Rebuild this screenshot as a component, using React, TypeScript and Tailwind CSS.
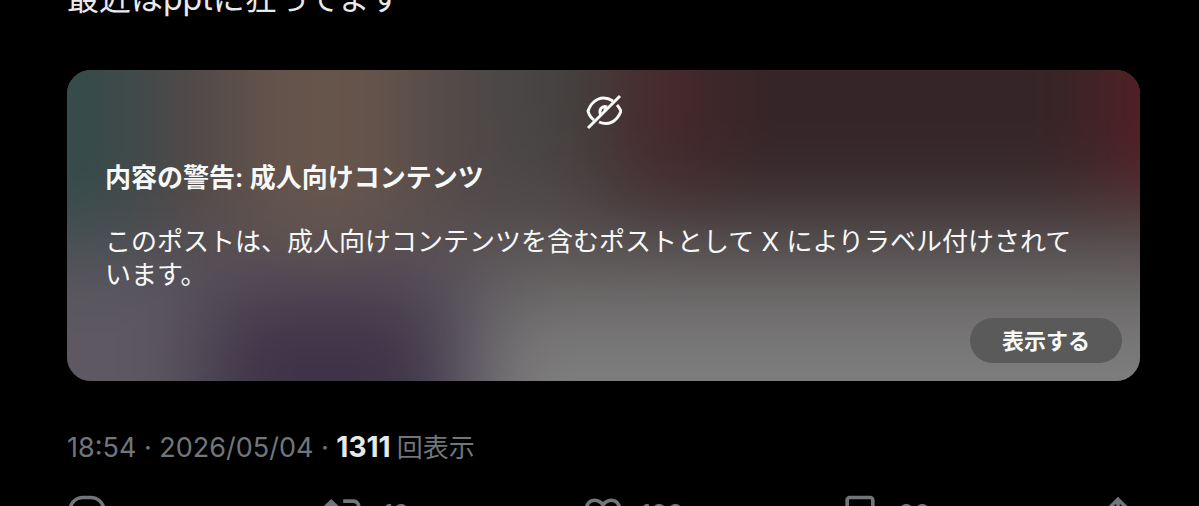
import { useState } from 'react';

interface Action {
  label: string;
  count?: string;
  path: string;
}

const actions: Action[] = [
  {
    label: '返信',
    path: 'M1.751 10c0-4.42 3.584-8 8.005-8h4.366c4.49 0 8.129 3.64 8.129 8.13 0 2.96-1.607 5.68-4.196 7.11l-8.054 4.46v-3.69h-.067c-4.49.1-8.183-3.51-8.183-8.01zm8.005-6c-3.317 0-6.005 2.69-6.005 6 0 3.37 2.77 6.08 6.138 6.01l.351-.01h1.761v2.3l5.087-2.81c1.951-1.08 3.163-3.13 3.163-5.36 0-3.39-2.744-6.13-6.129-6.13H9.756z',
  },
  {
    label: 'リポスト',
    count: '19',
    path: 'M4.5 3.88l4.432 4.14-1.364 1.46L5.5 7.55V16c0 1.1.896 2 2 2H13v2H7.5c-2.209 0-4-1.79-4-4V7.55L1.432 9.48.068 8.02 4.5 3.88zM16.5 6H11V4h5.5c2.209 0 4 1.79 4 4v8.45l2.068-1.93 1.364 1.46-4.432 4.14-4.432-4.14 1.364-1.46 2.068 1.93V8c0-1.1-.896-2-2-2z',
  },
  {
    label: 'いいね',
    count: '188',
    path: 'M16.697 5.5c-1.222-.06-2.679.51-3.89 2.16l-.805 1.09-.806-1.09C9.984 6.01 8.526 5.44 7.304 5.5c-1.243.07-2.349.78-2.91 1.91-.552 1.12-.633 2.78.479 4.82 1.074 1.97 3.257 4.27 7.129 6.61 3.87-2.34 6.052-4.64 7.126-6.61 1.111-2.04 1.03-3.7.477-4.82-.561-1.13-1.666-1.84-2.908-1.91zm4.187 7.69c-1.351 2.48-4.001 5.12-8.379 7.67l-.503.3-.504-.3c-4.379-2.55-7.029-5.19-8.382-7.67-1.36-2.5-1.41-4.86-.514-6.67.887-1.79 2.647-2.91 4.601-3.01 1.651-.09 3.368.56 4.798 2.01 1.429-1.45 3.146-2.1 4.796-2.01 1.954.1 3.714 1.22 4.601 3.01.896 1.81.846 4.17-.514 6.67z',
  },
  {
    label: 'ブックマーク',
    count: '88',
    path: 'M4 4.5C4 3.12 5.119 2 6.5 2h11C18.881 2 20 3.12 20 4.5v18.44l-8-5.71-8 5.71V4.5zM6.5 4c-.276 0-.5.22-.5.5v14.56l6-4.29 6 4.29V4.5c0-.28-.224-.5-.5-.5h-11z',
  },
  {
    label: '共有',
    path: 'M12 2.59l5.7 5.7-1.41 1.42L13 6.41V16h-2V6.41l-3.3 3.3-1.41-1.42L12 2.59zM21 15l-.02 3.51c0 1.38-1.12 2.49-2.5 2.49H5.5C4.11 21 3 19.88 3 18.5V15h2v3.5c0 .28.22.5.5.5h12.98c.28 0 .5-.22.5-.5L19 15h2z',
  },
];

function Haze() {
  return (
    <svg
      className="absolute inset-0 -z-10 h-full w-full"
      viewBox="0 0 1074 312"
      preserveAspectRatio="none"
      aria-hidden="true"
    >
      <defs>
        <filter id="haze" x="-10%" y="-10%" width="120%" height="120%" colorInterpolationFilters="sRGB">
          <feGaussianBlur stdDeviation="44" />
        </filter>
      </defs>
      <g filter="url(#haze)">
        <rect x="-200" y="-200" width="1500" height="400" fill="#504849" />
        <rect x="-200" y="180" width="1500" height="400" fill="#5d5861" />
        <rect x="-200" y="-200" width="270" height="370" fill="#344b4a" />
        <rect x="170" y="-200" width="180" height="370" fill="#67554b" />
        <rect x="450" y="-200" width="80" height="300" fill="#424542" />
        <rect x="540" y="-200" width="800" height="340" fill="#352528" />
        <rect x="550" y="-200" width="90" height="310" fill="#4b292d" />
        <rect x="1040" y="-200" width="200" height="330" fill="#561e24" />
        <rect x="410" y="180" width="900" height="80" fill="#656363" />
        <rect x="420" y="250" width="900" height="360" fill="#7f7e7e" />
        <rect x="140" y="225" width="240" height="400" fill="#3d3247" />
      </g>
    </svg>
  );
}

function ContentWarning({ onShow }: { onShow: () => void }) {
  return (
    <section className="relative isolate mt-[51px] flex flex-col overflow-hidden rounded-3xl bg-[#514b4c] pt-6 pr-[18px] pb-[18px] pl-[38px] text-[#f7f9f9]">
      <Haze />
      <svg
        className="mr-5 h-9 w-9 self-center"
        viewBox="0 0 36 36"
        fill="none"
        stroke="currentColor"
        strokeWidth="3"
        aria-hidden="true"
      >
        <path d="M27 7C16 0 6 6 2 17c1 4 3 7 6 9" />
        <path d="M31 11c2 2 3 4 4 6-4 11-13 15-22 11" />
        <path d="M21 13c-5-2-9 3-6 8" />
        <path d="M18 16l3-3" />
        <path d="M2 34L34 2" />
      </svg>
      <h2 className="mt-[30px] text-[26px] leading-9 font-semibold">内容の警告: 成人向けコンテンツ</h2>
      <p className="mt-[29px] text-[26px] leading-[33px]">
        このポストは、成人向けコンテンツを含むポストとして X によりラベル付けされて
        <br />
        います。
      </p>
      <button
        type="button"
        onClick={onShow}
        className="mt-[27px] h-[45px] self-end rounded-full bg-[#5b5a5a] px-8 text-[22px] leading-8 font-bold"
      >
        表示する
      </button>
    </section>
  );
}

export default function App() {
  const [hidden, setHidden] = useState(true);

  return (
    <main className="h-screen overflow-hidden bg-black pr-[59px] pl-[67px] font-[Inter,'Noto_Sans_CJK_JP',sans-serif] text-[#e7e9ea]">
      <p className="-mt-[21px] text-[32px] leading-10">最近はpptに狂ってます</p>
      {hidden && <ContentWarning onShow={() => setHidden(false)} />}
      <div className="mt-12 text-[27px] leading-9 text-[#71767b]">
        <time dateTime="2026-05-04T18:54">18:54 · 2026/05/04</time> ·{' '}
        <strong className="text-[28px] font-bold text-[#e7e9ea]">1311</strong>
        <span className="ml-1.5 text-[26px]">回表示</span>
      </div>
      <div className="mt-[26px] -ml-0.5 flex text-[26px] leading-10 text-[#71767b]">
        {actions.map((action) => (
          <div key={action.label} className="flex-1 last:flex-none">
            <button type="button" aria-label={action.label} className="flex items-center gap-4">
              <svg className="h-11 w-11 shrink-0" viewBox="0 0 24 24" fill="currentColor" aria-hidden="true">
                <path d={action.path} />
              </svg>
              {action.count && <span>{action.count}</span>}
            </button>
          </div>
        ))}
      </div>
    </main>
  );
}
